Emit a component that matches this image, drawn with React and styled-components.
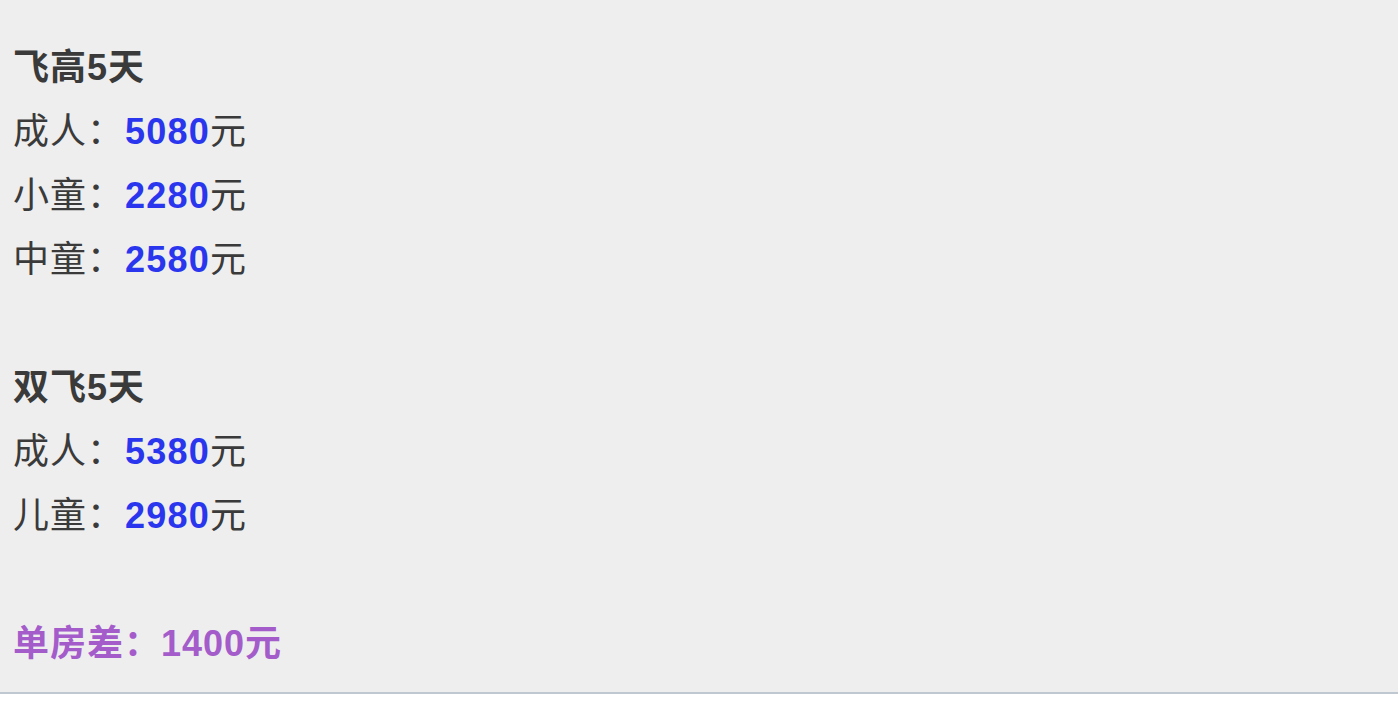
import React from 'react'
import styled, { createGlobalStyle } from 'styled-components'

const GlobalStyle = createGlobalStyle`
  html, body {
    margin: 0;
    padding: 0;
    background: #ffffff;
  }
`

const prices = [
  {
    title: '飞高5天',
    rows: [
      { label: '成人', price: '5080' },
      { label: '小童', price: '2280' },
      { label: '中童', price: '2580' },
    ],
  },
  {
    title: '双飞5天',
    rows: [
      { label: '成人', price: '5380' },
      { label: '儿童', price: '2980' },
    ],
  },
]

const App = () => {
  return (
    <>
      <GlobalStyle />
      <Wrapper>
        {prices.map((group) => (
          <Group key={group.title}>
            <Title>{group.title}</Title>
            {group.rows.map((row) => (
              <Line key={row.label}>
                {row.label}：<Price>{row.price}</Price>元
              </Line>
            ))}
          </Group>
        ))}
        <Note>单房差：1400元</Note>
      </Wrapper>
    </>
  )
}

const Wrapper = styled.section`
  background: #eeeeee;
  border-bottom: 2px solid #bfc8d1;
  padding: 36px 12px 16px 13px;
  font-family: "Liberation Sans", Arial, "Noto Sans CJK SC", sans-serif;
  font-size: 36px;
  line-height: 64px;
  letter-spacing: 1px;
  color: #3a3a3a;
`

const Group = styled.div`
  margin-bottom: 64px;
`

const Title = styled.div`
  font-weight: bold;
`

const Line = styled.div``

const Price = styled.b`
  color: #2a36ee;
  letter-spacing: 1.2px;
  margin-left: 1px;
`

const Note = styled.div`
  font-weight: bold;
  color: #a45ccb;
`

export default App
